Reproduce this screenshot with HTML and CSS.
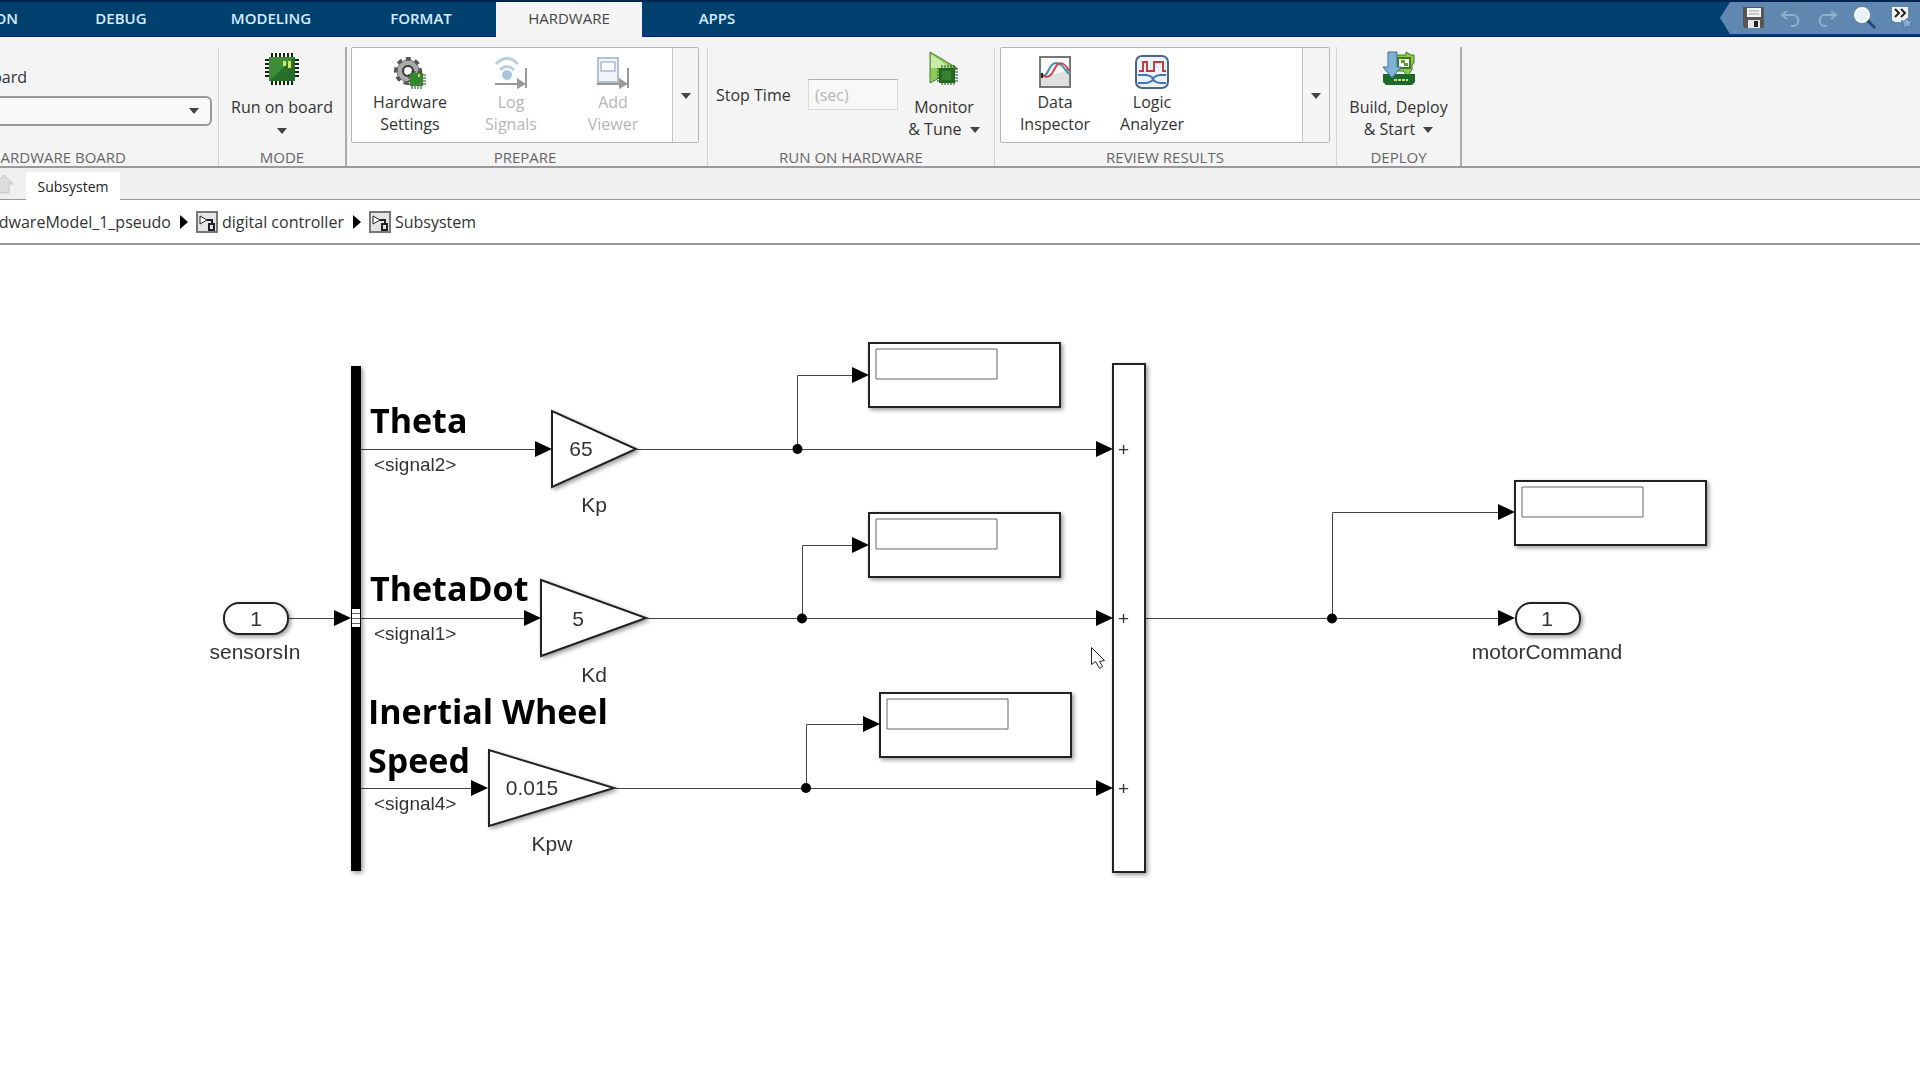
FILE: index.html
```html
<!DOCTYPE html>
<html lang="en">
<head>
<meta charset="utf-8">
<title>Subsystem - Simulink</title>
<link rel="stylesheet" href="styles.css">
</head>
<body>
<header class="tabbar">
  <nav class="tabs">
    <a class="tab tab-cut" href="#"><span>SIMULATION</span></a>
    <a class="tab" href="#">DEBUG</a>
    <a class="tab" href="#">MODELING</a>
    <a class="tab" href="#">FORMAT</a>
    <a class="tab tab-active" href="#">HARDWARE</a>
    <a class="tab" href="#">APPS</a>
  </nav>
  <div class="quick">
    <button class="quick-btn" aria-label="Save"><svg width="24" height="24" viewBox="0 0 24 24"><path d="M1 1h21v21H3l-2-2z" fill="#565656"/><path d="M5 2h14v9H5z" fill="#f4f4f4"/><path d="M7 5h10M7 8h10" stroke="#999"/><path d="M6 14h12v8H6z" fill="#e6e6e6"/><path d="M12 15h4v6h-4z" fill="#222"/></svg></button>
    <button class="quick-btn" aria-label="Undo"><svg width="24" height="24" viewBox="0 0 24 24" fill="none" stroke="#8fb0d0" stroke-width="2"><path d="M3 9h11c7 0 7 11 0 11h-2"/><path d="M8 5 3 9l5 4"/></svg></button>
    <button class="quick-btn" aria-label="Redo"><svg width="24" height="24" viewBox="0 0 24 24" fill="none" stroke="#8fb0d0" stroke-width="2"><path d="M20 9H9c-7 0-7 11 0 11h2"/><path d="m15 5 5 4-5 4"/></svg></button>
    <button class="quick-btn" aria-label="Search"><svg width="24" height="24" viewBox="0 0 24 24"><path d="m14 14 8 8" stroke="#1d4a7c" stroke-width="3"/><circle cx="9" cy="9" r="7" fill="#e6f2fa" stroke="#fff" stroke-width="2"/></svg></button>
    <button class="quick-btn" aria-label="More shortcuts"><svg width="24" height="24" viewBox="0 0 24 24"><path d="M2 1h16v15H5l-3-2z" fill="#f2f4f6"/><path d="m5 3 4 4-4 4M11 3l4 4-4 4" fill="none" stroke="#222" stroke-width="2"/><path d="m17 12 2 3h4l-3 3 1 4-4-2-4 2 1-4-3-3h4z" fill="#8aaed2" stroke="#4b76a4"/></svg></button>
  </div>
</header>

<main>
<section class="ribbon" aria-label="Hardware tools">
  <div class="group group-board">
    <div class="group-body board-body">
      <label class="cut-label" for="board">Hardware Board</label>
      <select id="board" class="board-select"><option></option></select>
      <svg class="caret board-caret" width="10" height="6" viewBox="0 0 10 6"><path d="M0 0h10L5 6z"/></svg>
    </div>
    <h2 class="group-title cut-title">HARDWARE BOARD</h2>
  </div>
  <div class="group group-mode">
    <div class="group-body">
      <button class="tool tool-large">
        <svg width="36" height="32" viewBox="0 0 36 32"><g stroke="#15240f" stroke-width="2"><path d="M8 0v32M12 0v32M16 0v32M20 0v32M24 0v32M28 0v32M1 7h34M1 11h34M1 15h34M1 19h34M1 23h34"/></g><path d="M5 4h26v24H5z" fill="#276f28"/><path d="M5 4h26L5 28z" fill="#3c8c3a"/><path d="M19 8h3v5h-3zM24 8h3v7h-3z" fill="#d8e85a"/></svg>
        <span>Run on board</span>
        <span class="line-caret"><svg class="caret" width="10" height="6" viewBox="0 0 10 6"><path d="M0 0h10L5 6z"/></svg></span>
      </button>
    </div>
    <h2 class="group-title">MODE</h2>
  </div>
  <div class="group group-prepare">
    <div class="group-body">
      <div class="gallery">
        <div class="gallery-items prepare-items">
          <button class="tool">
            <svg width="32" height="32" viewBox="0 0 32 32"><circle cx="14" cy="14" r="12" fill="none" stroke="#555" stroke-width="4" stroke-dasharray="5 4"/><circle cx="14" cy="14" r="8" fill="#eee" stroke="#aaa" stroke-width="5"/><circle cx="14" cy="14" r="11" fill="none" stroke="#666"/><circle cx="14" cy="14" r="5" fill="#fff" stroke="#333" stroke-width="2"/><path d="M18 14v18M21 14v18M24 14v18M27 14v18M14 18h18M14 21h18M14 24h18M14 27h18" stroke="#1d471b"/><path d="M16 16h13v13H16z" fill="#35872f"/><path d="M24 17h2v3h-2z" fill="#c9e056"/></svg>
            <span>Hardware<br>Settings</span>
          </button>
          <button class="tool" disabled>
            <svg width="34" height="32" viewBox="0 0 34 32"><g fill="none" stroke="#bccddb" stroke-width="3"><path d="M2 7q11-11 22 0M6 13q7-7 14 0"/></g><circle cx="13" cy="18" r="5" fill="#a9c6dd"/><path d="M1 27h25M32 11v20" stroke="#999" stroke-width="2"/><path d="m23 21 9 6-9 5z" fill="#999"/></svg>
            <span>Log<br>Signals</span>
          </button>
          <button class="tool" disabled>
            <svg width="34" height="32" viewBox="0 0 34 32"><path d="M2 1h20v24H2z" fill="#f0f3f7" stroke="#b5bfcb" stroke-width="2"/><path d="M5 5h14v9H5z" fill="#fff" stroke="#b9cbe0" stroke-width="2"/><path d="M1 27h25M32 11v20" stroke="#999" stroke-width="2"/><path d="m23 21 9 6-9 5z" fill="#999"/></svg>
            <span>Add<br>Viewer</span>
          </button>
        </div>
        <button class="gallery-more" aria-label="More prepare tools"><svg class="caret" width="10" height="6" viewBox="0 0 10 6"><path d="M0 0h10L5 6z"/></svg></button>
      </div>
    </div>
    <h2 class="group-title">PREPARE</h2>
  </div>
  <div class="group group-run">
    <div class="group-body run-body">
      <label class="stop-label" for="stop">Stop Time</label>
      <input id="stop" class="stop-input" type="text" placeholder="(sec)" disabled>
      <button class="tool tool-large">
        <svg width="30" height="34" viewBox="0 0 30 34"><path d="M1 1v31L28 17z" fill="#8ccc58" stroke="#4a7a32"/><path d="M2 3v14l20 0z" fill="#c9ecaa"/><path d="M13 14v20M16 14v20M19 14v20M22 14v20M25 14v20M8 18h21M8 21h21M8 24h21M8 27h21M8 30h21" stroke="#1d471b" stroke-width="1"/><path d="M10 17h16v15H10z" fill="#22681f"/><path d="M13 20h9v9h-9z" fill="#358233"/></svg>
        <span>Monitor<br>&amp; Tune <svg class="caret inline-caret" width="10" height="6" viewBox="0 0 10 6"><path d="M0 0h10L5 6z"/></svg></span>
      </button>
    </div>
    <h2 class="group-title">RUN ON HARDWARE</h2>
  </div>
  <div class="group group-review">
    <div class="group-body">
      <div class="gallery">
        <div class="gallery-items review-items">
          <button class="tool">
            <svg width="32" height="34" viewBox="0 -1 32 34"><path d="M1 1h30v30H1z" fill="#fafafa" stroke="#777" stroke-width="2"/><path d="M2 30v-8L30 14v16z" fill="#e0e0e0"/><g fill="none" stroke-width="2"><path d="M2 20c8 2 7-13 15-13 7 0 9 8 13 11" stroke="#3f93ad"/><path d="M2 18c6 6 11 1 13-4 4-9 10-9 15 1" stroke="#c9434c"/></g><path d="M3 17v5" stroke="#222" stroke-width="2"/></svg>
            <span>Data<br>Inspector</span>
          </button>
          <button class="tool">
            <svg width="34" height="34" viewBox="0 0 34 34"><rect x="1" y="1" width="32" height="32" rx="6" fill="#edf2f8" stroke="#4c638c" stroke-width="2"/><path d="M4 16h4V7h4v9h7V7h9v9h3" fill="none" stroke="#c53b45" stroke-width="2"/><path d="M3 20h8q6 1 7 4t7 4h6M3 28h8q6-1 7-4t7-4h6" fill="none" stroke="#3c78b5" stroke-width="2"/></svg>
            <span>Logic<br>Analyzer</span>
          </button>
        </div>
        <button class="gallery-more" aria-label="More review tools"><svg class="caret" width="10" height="6" viewBox="0 0 10 6"><path d="M0 0h10L5 6z"/></svg></button>
      </div>
    </div>
    <h2 class="group-title">REVIEW RESULTS</h2>
  </div>
  <div class="group group-deploy">
    <div class="group-body">
      <button class="tool tool-large">
        <svg width="34" height="34" viewBox="0 0 34 34"><path d="M1 23h32v8l-3 3H4l-3-3z" fill="#1b6a2c"/><path d="M12 29h14" stroke="#bfe07a" stroke-width="2" stroke-dasharray="3 1"/><path d="M13 4h11V1l5 3h3v8l-2 2v5l-4 5-5-4h-8z" fill="#8ccb48" stroke="#3d7b22"/><path d="M16 7h12v10H16z" fill="#fff" stroke="#3d7b22" stroke-width="2"/><path d="M19 9h4v3h3v3h-4v-3h-3z" fill="#5c9d35"/><path d="M6 1h9v15h4L10 27 1 16h5z" fill="#7fb2db" stroke="#3f6f9f"/></svg>
        <span>Build, Deploy<br>&amp; Start <svg class="caret inline-caret" width="10" height="6" viewBox="0 0 10 6"><path d="M0 0h10L5 6z"/></svg></span>
      </button>
    </div>
    <h2 class="group-title">DEPLOY</h2>
  </div>
</section>

<nav class="docbar">
  <button class="up-btn" aria-label="Up to parent"><svg width="16" height="20" viewBox="0 0 16 20"><path d="m4 1 9 9H9v9H-1v-9h-4z" fill="#dcdcdc" stroke="#c4c4c4"/></svg></button>
  <a class="doc-tab" href="#">Subsystem</a>
</nav>

<nav class="crumbs" aria-label="Model path">
  <a class="crumb crumb-cut" href="#"><span>hardwareModel_1_pseudo</span></a>
  <svg class="crumb-arrow" width="8" height="14" viewBox="0 0 8 14"><path d="M0 0v14l8-7z"/></svg>
  <a class="crumb" href="#"><svg width="22" height="22" viewBox="0 0 22 22"><path d="M1 1h20v20H1z" fill="#e4e4e4" stroke="#777" stroke-width="2"/><path d="m4 5 7 4-7 4z" fill="#fff" stroke="#222"/><path d="M11 9h5v4M13 13h5v6h-5z" fill="none" stroke="#222" stroke-width="2"/></svg><span>digital controller</span></a>
  <svg class="crumb-arrow" width="8" height="14" viewBox="0 0 8 14"><path d="M0 0v14l8-7z"/></svg>
  <a class="crumb" href="#"><svg width="22" height="22" viewBox="0 0 22 22"><path d="M1 1h20v20H1z" fill="#e4e4e4" stroke="#777" stroke-width="2"/><path d="m4 5 7 4-7 4z" fill="#fff" stroke="#222"/><path d="M11 9h5v4M13 13h5v6h-5z" fill="none" stroke="#222" stroke-width="2"/></svg><span>Subsystem</span></a>
</nav>

<svg class="diagram" viewBox="0 244 1920 836" role="img" aria-label="Subsystem block diagram">
  <defs>
    <path id="arrow" d="M0 0-17-8V8z"/>
    <g id="display"><path class="block" d="M0 0h191v64H0z"/><path class="readout" d="M7 6h121v30H7z"/></g>
    <rect id="port" class="block" width="64" height="31" rx="15"/>
  </defs>

  <!-- signal lines -->
  <g class="wire">
    <path d="M288 618.500H340M361 449.500H540M361 618.500H530M361 788.500H478"/>
    <path d="M637 449.500H1103M647 618.500H1103M615 788.500H1103M1146 618.500H1504"/>
    <path d="M797.500 449V375.500H858M802.500 618V545.500H858M806.500 788V724.500H870M1332.500 618V512.500H1504"/>
  </g>

  <!-- blocks -->
  <g class="shaded">
    <path class="bus" d="M351 366h10v505h-10z"/>
    <path class="block" d="M552 411v76l84-38zM541 580v76l105-38zM489 750v76l125-38z"/>
    <use href="#display" x="869" y="343"/>
    <use href="#display" x="869" y="513"/>
    <use href="#display" x="880" y="693"/>
    <use href="#display" x="1515" y="481"/>
    <path class="block" d="M1113 364h32v508h-32z"/>
    <use href="#port" x="224" y="603"/>
    <use href="#port" x="1516" y="603"/>
  </g>
  <path d="M352 609h8v18h-8z" fill="#fff"/>
  <path class="readout" d="M352 613.500h8M352 618.500h8M352 623.500h8"/>

  <!-- arrowheads and branch points -->
  <use href="#arrow" x="351" y="618"/><use href="#arrow" x="552" y="449"/>
  <use href="#arrow" x="541" y="618"/><use href="#arrow" x="488" y="788"/>
  <use href="#arrow" x="1113" y="449"/><use href="#arrow" x="1113" y="618"/>
  <use href="#arrow" x="1113" y="788"/><use href="#arrow" x="869" y="375"/>
  <use href="#arrow" x="869" y="545"/><use href="#arrow" x="880" y="724"/>
  <use href="#arrow" x="1515" y="512"/><use href="#arrow" x="1515" y="618"/>
  <circle cx="797.500" cy="449" r="5"/><circle cx="802" cy="618.500" r="5"/>
  <circle cx="806" cy="788" r="5"/><circle cx="1332" cy="618.500" r="5"/>

  <!-- names and values -->
  <g class="name">
    <text x="255" y="659">sensorsIn</text><text x="1547" y="659">motorCommand</text>
    <text x="594" y="512">Kp</text><text x="594" y="682">Kd</text><text x="552" y="851">Kpw</text>
    <text x="581" y="456">65</text><text x="578" y="626">5</text><text x="532" y="795">0.015</text>
    <text x="256" y="626">1</text><text x="1547" y="626">1</text>
  </g>
  <g class="signal">
    <text x="374" y="471">&lt;signal2&gt;</text><text x="374" y="640">&lt;signal1&gt;</text><text x="374" y="810">&lt;signal4&gt;</text>
    <text x="1118" y="456">+</text><text x="1118" y="625">+</text><text x="1118" y="795">+</text>
  </g>
  <g class="caption">
    <text x="370" y="433">Theta</text><text x="370" y="601">ThetaDot</text>
    <text x="368" y="724">Inertial Wheel</text><text x="368" y="773">Speed</text>
  </g>

  <!-- mouse pointer -->
  <path class="pointer" d="M1091.500 647.500v17l4-3 4 7 3-2-3-5 5-1z"/>
</svg>
</main>
</body>
</html>
```
FILE: styles.css
```css
* { box-sizing: border-box; }

body {
  margin: 0;
  background: #fff;
  color: #333;
  font: 16px/22px "Open Sans", "Noto Sans", sans-serif;
  overflow-x: hidden;
}

a { color: inherit; text-decoration: none; }

button {
  margin: 0;
  padding: 0;
  border: 0;
  background: none;
  color: inherit;
  font: inherit;
}

/* toolstrip tabs */
.tabbar {
  display: flex;
  justify-content: space-between;
  height: 37px;
  padding-top: 2px;
  background: #00406f;
  box-shadow: inset 0 2px #00244f, inset 0 -1px #001f5c;
}
.tabs { display: flex; }
.tab {
  display: flex;
  align-items: center;
  justify-content: center;
  width: 150px;
  padding-bottom: 4px;
  color: #d8ecff;
  font-size: 15px;
  font-weight: 600;
}
.tab-cut { width: 46px; padding-right: 28px; justify-content: flex-end; }
.tab-active {
  width: 146px;
  background: #f5f5f5;
  color: #444;
  font-weight: 400;
}

.quick {
  display: flex;
  align-items: center;
  gap: 13px;
  height: 32px;
  padding: 0 6px 0 22px;
  background: #5f87af;
  clip-path: polygon(0 50%, 10px 0, 100% 0, 100% 100%, 10px 100%);
}
.quick-btn { width: 24px; height: 24px; }
.quick-btn svg { display: block; }

/* ribbon */
.ribbon {
  display: flex;
  height: 131px;
  padding-top: 10px;
  background: #f4f4f4;
  border-bottom: 2px solid #9a9a9a;
}
.group {
  display: flex;
  flex-direction: column;
  border-right: 1px solid #d4d4d4;
}
.group-body { flex: 1; }
.group-title {
  margin: 0;
  color: #666;
  font-size: 15px;
  line-height: 18px;
  font-weight: 400;
  text-align: center;
}
.group-board { width: 219px; }
.group-mode { width: 128px; border-right: 2px solid #aaa; }
.group-prepare { width: 361px; padding: 0 8px 0 4px; }
.group-run { width: 287px; }
.group-review { width: 342px; padding: 0 6px 0 5px; }
.group-deploy { width: 125px; border-right: 2px solid #aaa; }

.board-body {
  display: grid;
  grid-template-rows: 22px 30px;
  row-gap: 8px;
  align-content: end;
  padding: 0 6px 22px 0;
}
.cut-label { width: 27px; display: flex; justify-content: flex-end; white-space: nowrap; }
.board-select {
  grid-area: 2 / 1;
  appearance: none;
  width: 100%;
  border: 2px solid #999;
  border-left: 0;
  border-radius: 0 6px 6px 0;
  background: #f8f8f8;
}
.board-caret { grid-area: 2 / 1; place-self: center end; margin-right: 13px; }
.cut-title { display: flex; justify-content: flex-end; width: 126px; white-space: nowrap; }

.caret { fill: #444; }
.tool {
  display: flex;
  flex-direction: column;
  align-items: center;
  gap: 2px;
  text-align: center;
  white-space: nowrap;
}
.tool:disabled { color: #b5b5b5; }
.tool-large { width: 100%; padding-top: 4px; gap: 11px; }
.group-mode .tool-large { padding-top: 6px; }
.line-caret { margin-top: -12px; }
.inline-caret { margin: 0 0 2px 4px; }

.gallery {
  display: flex;
  height: 96px;
  border: 1px solid #b5b5b5;
  border-radius: 2px;
  background: #fff;
}
.prepare-items, .review-items { flex: 1; display: grid; align-items: start; padding-top: 9px; }
.prepare-items { grid-template-columns: 116px 86px 118px; }
.review-items { grid-template-columns: 108px 86px; padding-top: 7px; }
.gallery-more {
  width: 27px;
  padding-bottom: 4px;
  border-left: 1px solid #c4c4c4;
  background: #f5f5f5;
}

.run-body { display: flex; align-items: flex-start; padding-left: 8px; }
.stop-label { margin-top: 37px; width: 92px; white-space: nowrap; }
.stop-input {
  width: 90px;
  height: 31px;
  margin-top: 32px;
  padding: 0 6px;
  border: 1px solid #d8d8d8;
  border-top-color: #b0b0b0;
  background: #f8f8f8;
  font: inherit;
}
.stop-input::placeholder { color: #b5b5b5; opacity: 1; }
.run-body .tool-large { width: 92px; }

/* document tabs */
.docbar {
  display: flex;
  align-items: stretch;
  height: 32px;
  padding-top: 4px;
  background: #efefef;
  box-shadow: inset 0 -1px #999;
}
.up-btn { width: 26px; text-align: left; }
.doc-tab {
  width: 94px;
  background: #fff;
  color: #222;
  font-size: 14px;
  line-height: 29px;
  text-align: center;
}

/* model path */
.crumbs {
  display: flex;
  align-items: center;
  height: 45px;
  padding-top: 1px;
  border-bottom: 2px solid #999;
  color: #333;
}
.crumb { display: flex; align-items: center; gap: 4px; white-space: nowrap; }
.crumb-cut { width: 171px; justify-content: flex-end; }
.crumb-arrow { margin: 0 8px 0 9px; }

/* canvas */
.diagram { display: block; width: 100%; height: auto; margin-top: -1px; }
.wire { fill: none; stroke: #444; }
.block { fill: #fff; stroke: #222; stroke-width: 2; }
.readout { fill: none; stroke: #666; stroke-width: 1; }
.bus { fill: #000; }
.shaded { filter: drop-shadow(2px 2px 2px rgba(0, 0, 0, .4)); }
.name, .signal { font-family: "Liberation Sans", Arial, sans-serif; fill: #333; }
.name { font-size: 21px; text-anchor: middle; }
.signal { font-size: 19px; }
.caption { font: 700 34px "Open Sans", "Noto Sans", sans-serif; fill: #000; }
.pointer { fill: #fff; stroke: #222; }
```
